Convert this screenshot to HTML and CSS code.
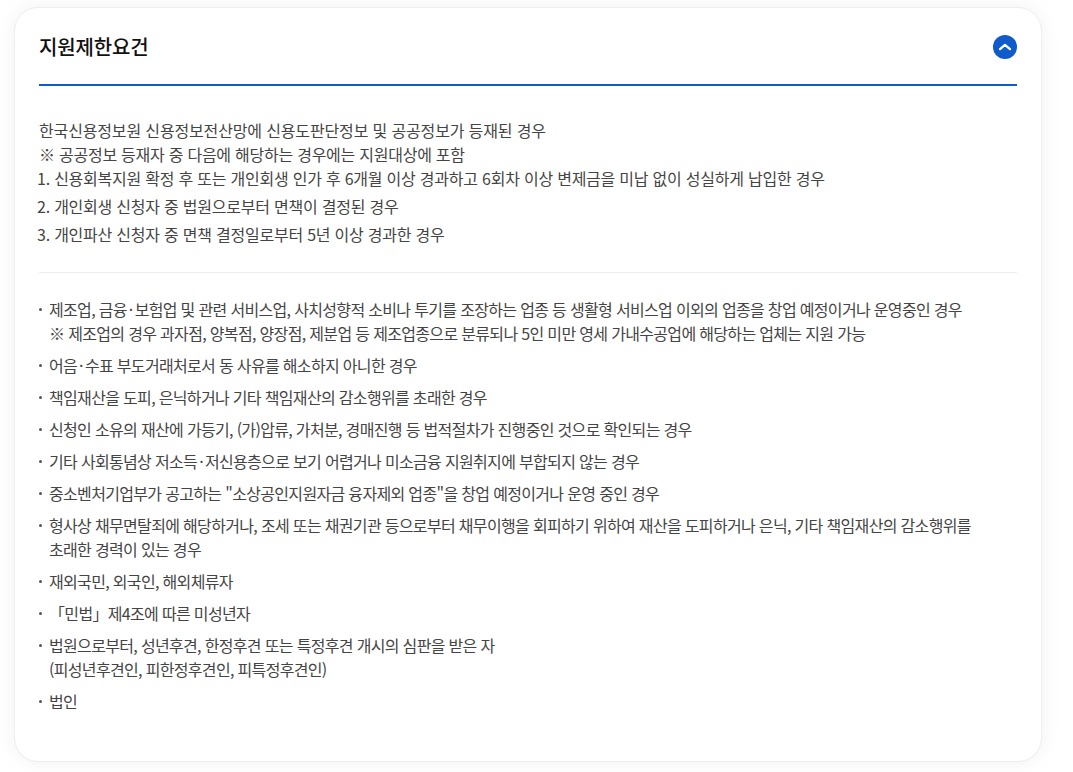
FILE: index.html
```html
<!DOCTYPE html>
<html lang="ko">
<head>
<meta charset="utf-8">
<title>지원제한요건</title>
<link rel="stylesheet" href="styles.css">
</head>
<body>
<section class="card">
  <header class="head">
    <h2 class="title">지원제한요건</h2>
    <span class="toggle">
      <svg width="24" height="24" viewBox="0 0 24 24"><circle cx="12" cy="12" r="12" fill="#0f5bc9"/><path d="M7 14.2 12 9.8l5 4.4" fill="none" stroke="#fff" stroke-width="2.2" stroke-linecap="round" stroke-linejoin="round"/></svg>
    </span>
  </header>
  <div class="intro">
    <p class="line lead">한국신용정보원 신용정보전산망에 신용도판단정보 및 공공정보가 등재된 경우</p>
    <p class="line sub">※ 공공정보 등재자 중 다음에 해당하는 경우에는 지원대상에 포함</p>
    <ol class="nums">
      <li>1. 신용회복지원 확정 후 또는 개인회생 인가 후 6개월 이상 경과하고 6회차 이상 변제금을 미납 없이 성실하게 납입한 경우</li>
      <li>2. 개인회생 신청자 중 법원으로부터 면책이 결정된 경우</li>
      <li>3. 개인파산 신청자 중 면책 결정일로부터 5년 이상 경과한 경우</li>
    </ol>
  </div>
  <ul class="items">
    <li>제조업, 금융<span class="mid">·</span>보험업 및 관련 서비스업, 사치성향적 소비나 투기를 조장하는 업종 등 생활형 서비스업 이외의 업종을 창업 예정이거나 운영중인 경우<br>※ 제조업의 경우 과자점, 양복점, 양장점, 제분업 등 제조업종으로 분류되나 5인 미만 영세 가내수공업에 해당하는 업체는 지원 가능</li>
    <li>어음<span class="mid">·</span>수표 부도거래처로서 동 사유를 해소하지 아니한 경우</li>
    <li>책임재산을 도피, 은닉하거나 기타 책임재산의 감소행위를 초래한 경우</li>
    <li>신청인 소유의 재산에 가등기, (가)압류, 가처분, 경매진행 등 법적절차가 진행중인 것으로 확인되는 경우</li>
    <li>기타 사회통념상 저소득<span class="mid">·</span>저신용층으로 보기 어렵거나 미소금융 지원취지에 부합되지 않는 경우</li>
    <li>중소벤처기업부가 공고하는 "소상공인지원자금 융자제외 업종"을 창업 예정이거나 운영 중인 경우</li>
    <li>형사상 채무면탈죄에 해당하거나, 조세 또는 채권기관 등으로부터 채무이행을 회피하기 위하여 재산을 도피하거나 은닉, 기타 책임재산의 감소행위를<br>초래한 경력이 있는 경우</li>
    <li>재외국민, 외국인, 해외체류자</li>
    <li>「민법」제4조에 따른 미성년자</li>
    <li>법원으로부터, 성년후견, 한정후견 또는 특정후견 개시의 심판을 받은 자<br>(피성년후견인, 피한정후견인, 피특정후견인)</li>
    <li>법인</li>
  </ul>
</section>
</body>
</html>
```

FILE: styles.css
```css
* { box-sizing: border-box; }
html, body { margin: 0; padding: 0; background: #fff; }
body {
  padding: 7px 31px 10px 14px;
  font-family: "Noto Sans CJK KR", "Noto Sans", sans-serif;
  color: #444;
  font-size: 16px;
  line-height: 24px;
  letter-spacing: -0.2px;
}
.card {
  background: #fff;
  border: 1px solid #eee;
  border-radius: 24px;
  padding: 16px 24px 48px;
  box-shadow: 0 0 20px rgba(0,0,0,.06);
}
.head {
  display: flex;
  align-items: center;
  justify-content: space-between;
  height: 62px;
  padding-bottom: 14px;
  border-bottom: 2px solid #0f5bc9;
}
.title { margin: 0; font-size: 20px; line-height: 30px; font-weight: 500; color: #111; letter-spacing: -0.15px; }
.toggle { display: flex; width: 24px; height: 24px; }
.intro { padding: 33px 0 26px; border-bottom: 1px solid #eee; }
.line { margin: 0; line-height: 23.5px; }
.lead { letter-spacing: -0.15px; }
.sub { letter-spacing: -0.25px; }
.nums { margin: 0 0 0 -2px; padding: 0; list-style: none; display: flex; flex-direction: column; gap: 4px; letter-spacing: -0.23px; }
.items { margin: 0; padding: 24px 0 0; list-style: none; display: flex; flex-direction: column; gap: 8px; letter-spacing: -0.67px; }
.items li { position: relative; padding-left: 10px; }
.items li::before {
  content: "";
  position: absolute;
  left: 0;
  top: 11px;
  width: 3px;
  height: 3px;
  border-radius: 50%;
  background: #555;
}
.mid { padding: 0 2px; }
```
